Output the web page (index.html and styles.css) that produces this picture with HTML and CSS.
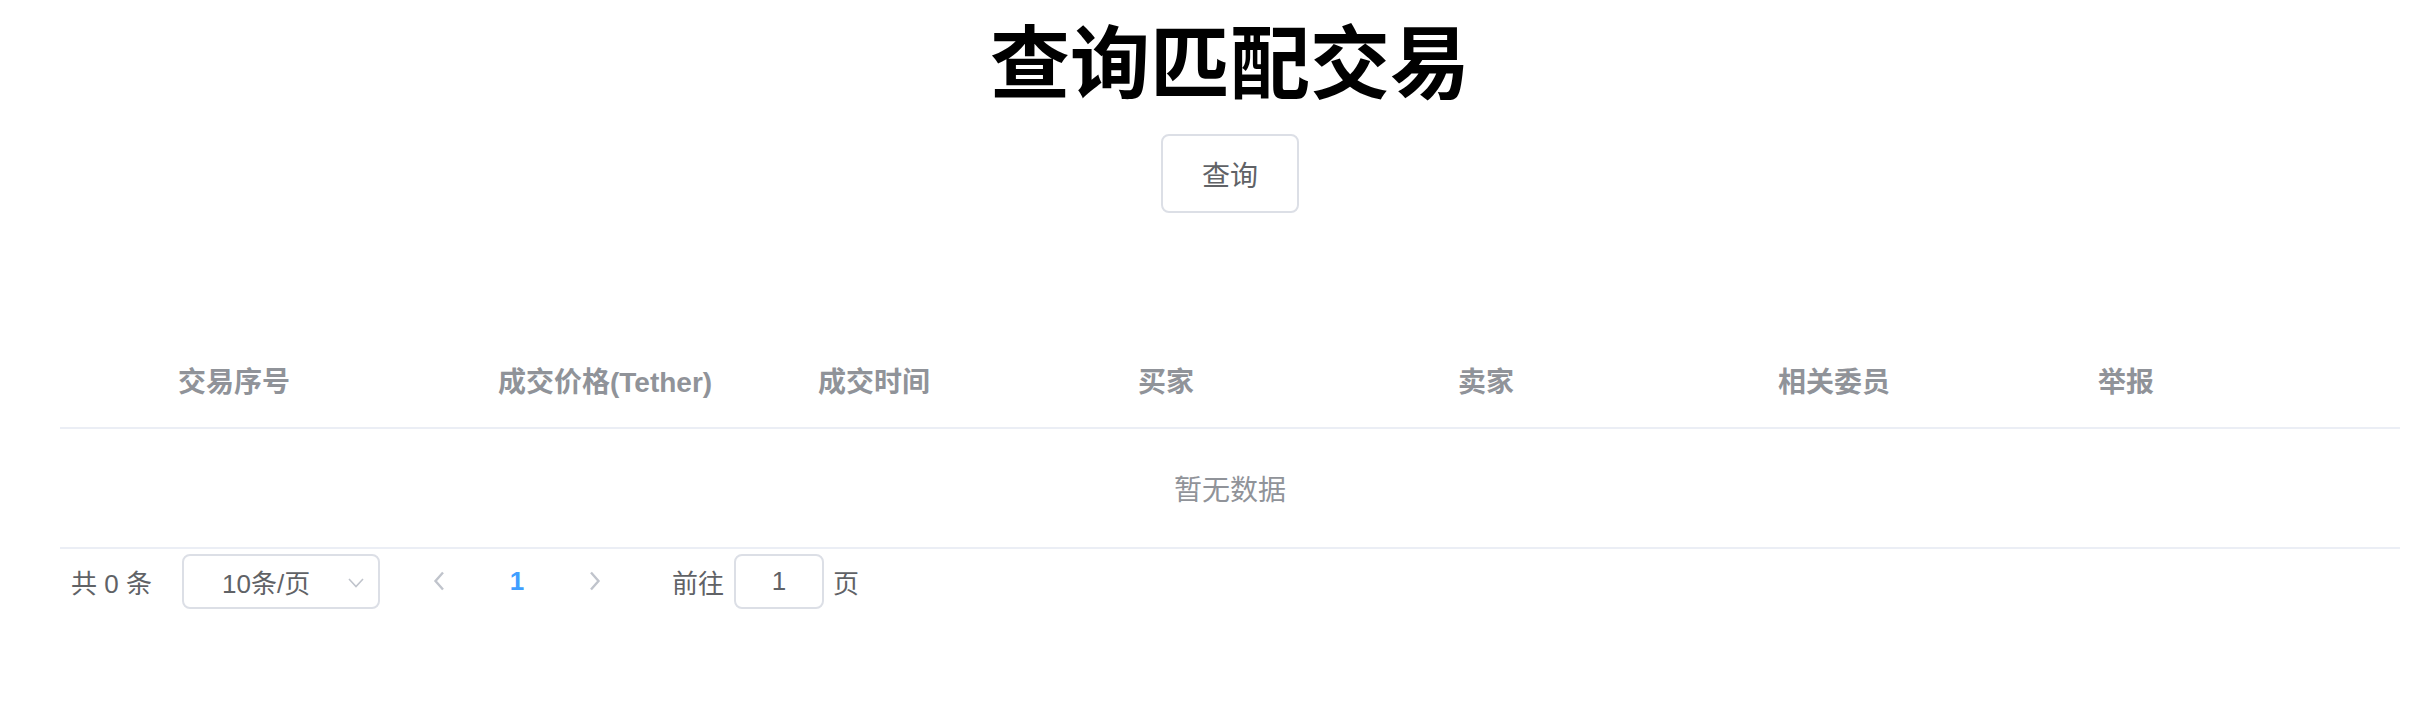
FILE: index.html
```html
<!DOCTYPE html>
<html lang="zh-CN">
<head>
<meta charset="utf-8">
<title>查询匹配交易</title>
<link rel="stylesheet" href="styles.css">
</head>
<body>
<div class="page">
  <h1 class="title">查询匹配交易</h1>
  <div class="actions">
    <button class="btn" type="button">查询</button>
  </div>
  <div class="table">
    <div class="thead">
      <div class="th"></div>
      <div class="th">交易序号</div>
      <div class="th">成交价格(Tether)</div>
      <div class="th">成交时间</div>
      <div class="th">买家</div>
      <div class="th">卖家</div>
      <div class="th">相关委员</div>
      <div class="th">举报</div>
    </div>
    <div class="empty">暂无数据</div>
  </div>
  <div class="pagination">
    <span class="total">共 0 条</span>
    <div class="sizes">
      <span class="sizes-text">10条/页</span>
      <svg class="sizes-arrow" width="16" height="10" viewBox="0 0 16 10"><path d="M1 1 L8 8.5 L15 1" fill="none" stroke="#c0c4cc" stroke-width="1.6"/></svg>
    </div>
    <button class="pbtn" type="button" aria-label="上一页">
      <svg width="12" height="20" viewBox="0 0 12 20"><path d="M10 1.5 L2.5 10 L10 18.5" fill="none" stroke="#c0c4cc" stroke-width="2.4"/></svg>
    </button>
    <span class="pager">1</span>
    <button class="pbtn" type="button" aria-label="下一页">
      <svg width="12" height="20" viewBox="0 0 12 20"><path d="M2 1.5 L9.5 10 L2 18.5" fill="none" stroke="#c0c4cc" stroke-width="2.4"/></svg>
    </button>
    <span class="jump">前往<span class="jump-input">1</span>页</span>
  </div>
</div>
</body>
</html>
```

FILE: styles.css
```css
html, body {
  margin: 0;
  padding: 0;
  background: #ffffff;
}

body {
  font-family: "Liberation Sans", "Noto Sans CJK SC", sans-serif;
  color: #606266;
}

.page {
  margin-left: 60px;
  width: 2340px;
}

.title {
  margin: 17px 0 0 0;
  font-family: "Noto Sans CJK SC", sans-serif;
  font-size: 80px;
  line-height: 80px;
  font-weight: 700;
  color: #000000;
  text-align: center;
}

.actions {
  display: flex;
  justify-content: center;
  margin-top: 37px;
}

.btn {
  box-sizing: border-box;
  width: 138px;
  height: 79px;
  border: 2px solid #dcdfe6;
  border-radius: 8px;
  background: #ffffff;
  color: #606266;
  font-family: "Noto Sans CJK SC", sans-serif;
  font-size: 28px;
  line-height: 1;
  padding: 0;
}

.table {
  margin-top: 120px;
}

.thead {
  display: grid;
  grid-template-columns: 98px repeat(7, 320px);
  border-bottom: 2px solid #ebeef5;
}

.th {
  height: 94px;
  padding-left: 20px;
  display: flex;
  align-items: center;
  font-size: 28px;
  font-weight: 700;
  color: #909399;
  white-space: nowrap;
}

.empty {
  height: 118px;
  border-bottom: 2px solid #ebeef5;
  display: flex;
  align-items: center;
  justify-content: center;
  font-size: 28px;
  color: #909399;
}

.pagination {
  display: flex;
  align-items: center;
  height: 56px;
  padding: 4px 10px;
  font-size: 26px;
  color: #606266;
}

.total {
  margin-left: 1px;
  width: 111px;
}

.sizes {
  box-sizing: border-box;
  width: 198px;
  height: 55px;
  border: 2px solid #dcdfe6;
  border-radius: 8px;
  position: relative;
  display: flex;
  align-items: center;
}

.sizes-text {
  margin-left: 38px;
}

.sizes-arrow {
  position: absolute;
  right: 14px;
  top: 22px;
}

.pbtn {
  width: 78px;
  height: 56px;
  border: 0;
  background: transparent;
  padding: 0;
  display: flex;
  align-items: center;
  justify-content: center;
}

.sizes + .pbtn {
  margin-left: 20px;
}

.pager {
  width: 78px;
  text-align: center;
  font-weight: 700;
  color: #409eff;
}

.jump {
  margin-left: 38px;
  display: flex;
  align-items: center;
}

.jump-input {
  box-sizing: border-box;
  width: 90px;
  height: 55px;
  margin: 0 9px 0 10px;
  border: 2px solid #dcdfe6;
  border-radius: 8px;
  display: flex;
  align-items: center;
  justify-content: center;
}
```
